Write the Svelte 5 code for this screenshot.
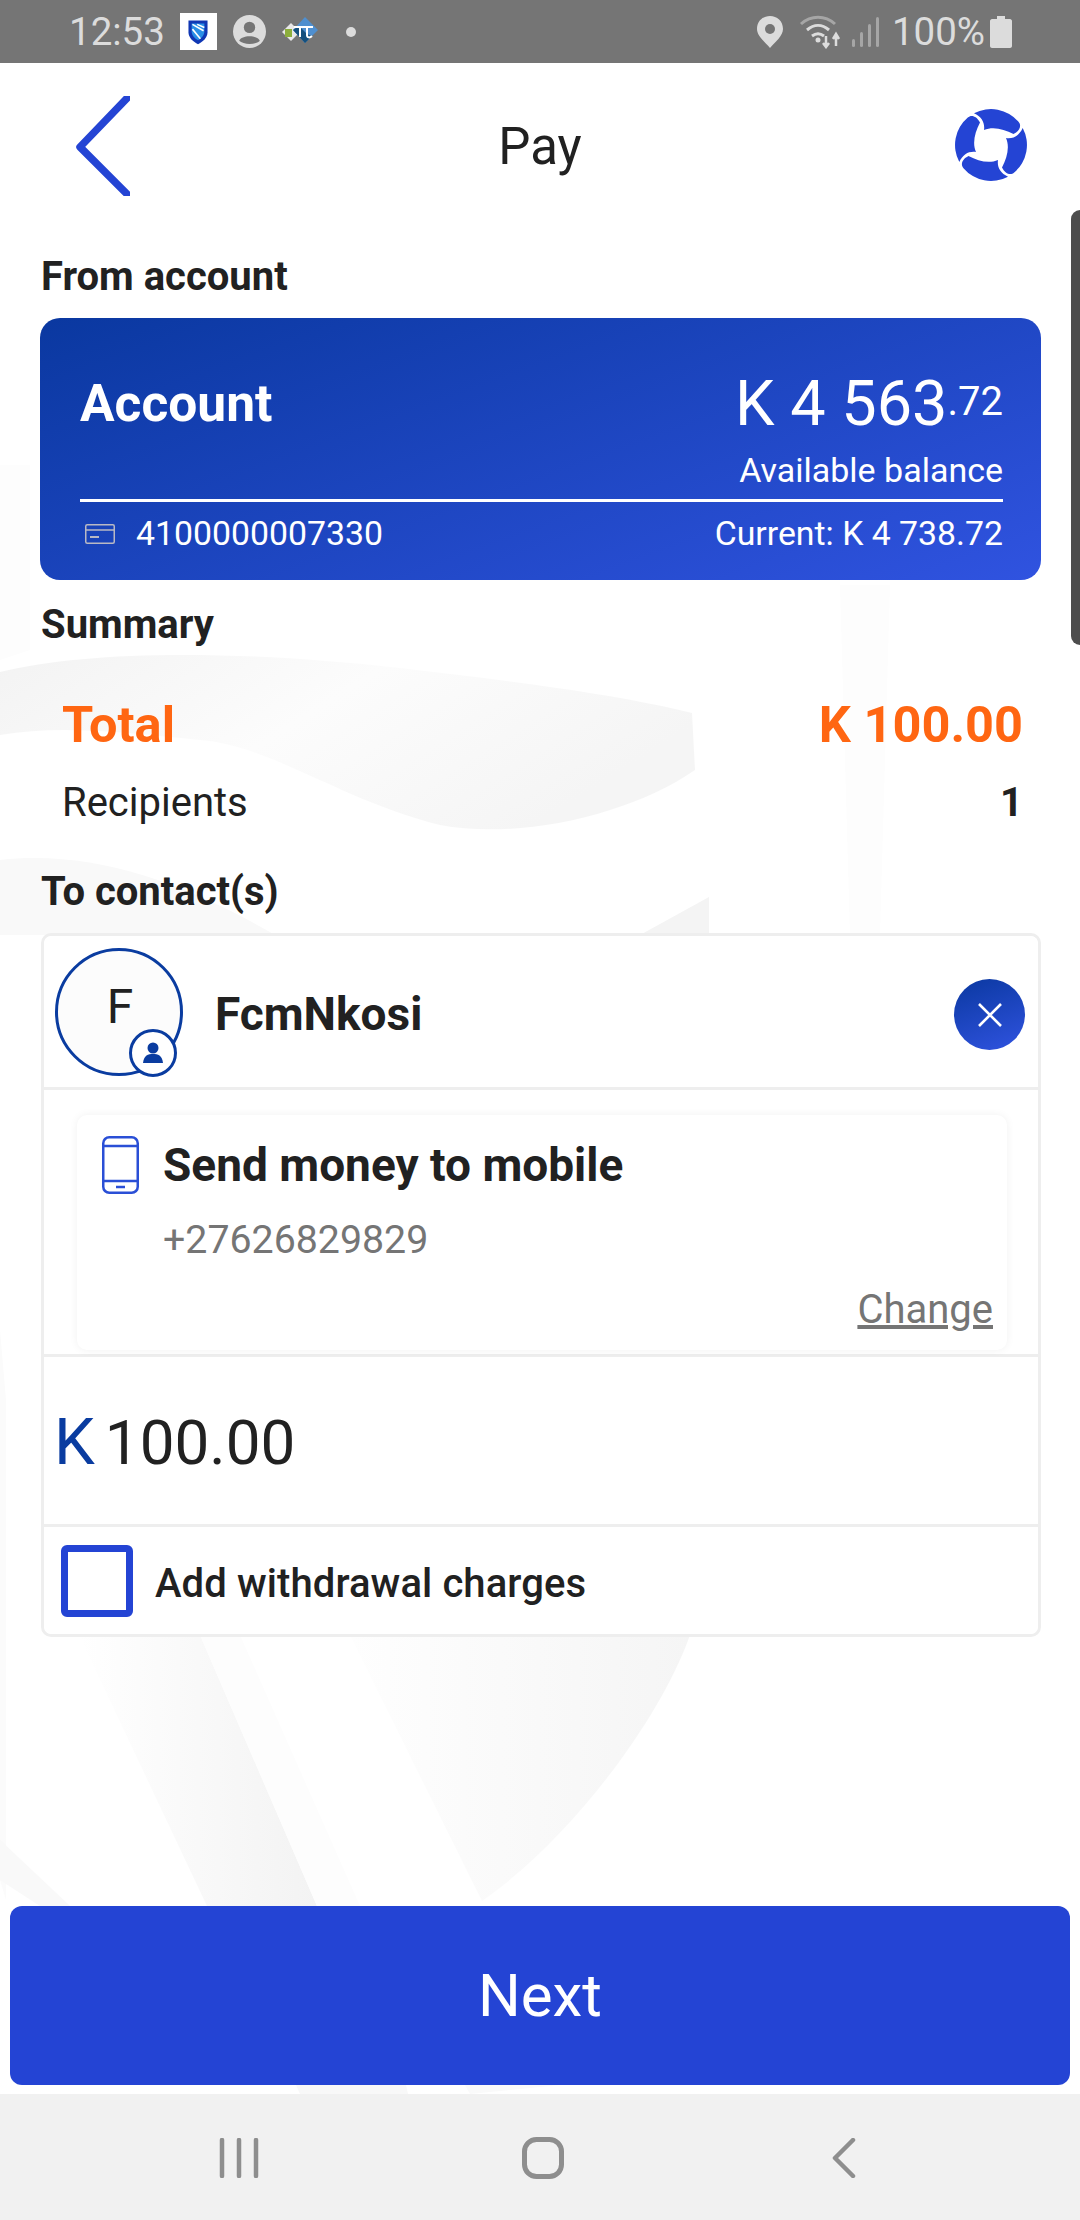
<script>
  let charges = $state(false);
</script>

<div class="page">
  <svg class="watermark" viewBox="0 0 1080 2220" width="1080" height="2220" aria-hidden="true">
    <defs>
      <linearGradient id="fadeA" x1="0" y1="0" x2="1" y2="0.4">
        <stop offset="0" stop-color="#f3f3f3" />
        <stop offset="0.5" stop-color="#fcfcfc" />
        <stop offset="1" stop-color="#f5f5f5" />
      </linearGradient>
      <linearGradient id="fadeB" x1="0" y1="0" x2="1" y2="0">
        <stop offset="0" stop-color="#ffffff" />
        <stop offset="1" stop-color="#f3f3f3" />
      </linearGradient>
      <linearGradient id="fadeC" x1="0" y1="0" x2="1" y2="0">
        <stop offset="0" stop-color="#fefefe" />
        <stop offset="1" stop-color="#f5f5f5" />
      </linearGradient>
    </defs>
    <path d="M0 672C90 650 240 650 400 668C520 682 620 695 692 713L695 770C630 815 520 840 440 825C340 800 270 745 200 740C120 732 60 725 0 735Z" fill="url(#fadeA)" />
    <path d="M0 465H30V650L0 660Z" fill="#fdfdfd" />
    <path d="M0 860C90 850 180 880 275 935H0Z" fill="#f9f9f9" />
    <path d="M709 897V935H640Z" fill="#f4f4f4" />
    <path d="M840 585H890L880 935H850Z" fill="#fdfdfd" />
    <path d="M79 1635H200L317 1906H207Z" fill="url(#fadeB)" />
    <path d="M200 1635H240L360 1906H317Z" fill="#fdfdfd" />
    <path d="M350 1635H690C660 1720 570 1840 482 1901Z" fill="url(#fadeC)" />
    <path d="M0 1330L6 1400V1900L0 1880Z" fill="#fbfbfb" />
    <path d="M0 1840L70 1906H40L0 1880Z" fill="#f9f9f9" />
    <path d="M296 2085H406L408 2094H300Z" fill="#f8f8f8" />
    <path d="M465 2085H560L470 2094Z" fill="#fafafa" />
  </svg>

  <div class="scroll-thumb"></div>

  <header class="status">
    <div class="status-left">
      <span class="clock">12:53</span>
      <span class="bank-tile">
        <svg viewBox="0 0 30 34" width="24" height="27">
          <path d="M3 3H27V18C27 25 21 30 15 33C9 30 3 25 3 18Z" fill="#1037b4" />
          <path d="M7 7H23V17C23 22 19 26 15 28C11 26 7 22 7 17Z" fill="#2a8fe6" />
          <path d="M8 8L22 16M8 14L18 26M14 8L23 12" stroke="#fff" stroke-width="2" fill="none" />
        </svg>
      </span>
      <svg class="person" viewBox="0 0 32 32" width="33" height="33">
        <circle cx="16" cy="16" r="16" fill="#dcdcdc" />
        <circle cx="16" cy="12" r="5.5" fill="#757575" />
        <path d="M6 25C8 19 24 19 26 25C22 29 10 29 6 25Z" fill="#757575" />
      </svg>
      <svg class="pi" viewBox="0 0 38 32" width="38" height="32">
        <path d="M10 7L19 16L10 25L1 16Z" fill="#e8e8e8" />
        <path d="M4 13H11V21H4Z" fill="#8cae3c" />
        <path d="M24 1L37 14L24 27L12 14Z" fill="#4f8fcf" />
        <path d="M24 27L12 14L18 10L26 18L31 20Z" fill="#14507e" />
        <path d="M13 11H32M19 11V21M26 11V19C26 22 29 22 31 20" stroke="#fff" stroke-width="2" fill="none" />
      </svg>
      <span class="dot"></span>
    </div>
    <div class="status-right">
      <svg viewBox="0 0 26 32" width="26" height="32">
        <path d="M13 0C20 0 26 5 26 13C26 20 18 26 13 32C8 26 0 20 0 13C0 5 6 0 13 0Z" fill="#dcdcdc" />
        <circle cx="13" cy="13" r="5" fill="#757575" />
      </svg>
      <svg class="wifi" viewBox="0 0 44 34" width="44" height="34">
        <path d="M2 9C12 0 26 0 36 9" stroke="#a6a6a6" stroke-width="3" fill="none" />
        <path d="M8 15C15 9 23 9 30 15M13 21C17 18 21 18 25 21" stroke="#dcdcdc" stroke-width="3" fill="none" />
        <circle cx="19" cy="25" r="2.5" fill="#dcdcdc" />
        <path d="M27 21V31M24 28L27 32L30 28M37 31V20M34 24L37 19L40 24" stroke="#dcdcdc" stroke-width="2.5" fill="none" />
      </svg>
      <svg class="signal" viewBox="0 0 28 32" width="28" height="32">
        <g fill="#a6a6a6">
          <rect x="0" y="23" width="3" height="8" rx="1.5" />
          <rect x="8" y="16" width="3" height="15" rx="1.5" />
          <rect x="16" y="8" width="3" height="23" rx="1.5" />
          <rect x="24" y="1" width="3" height="30" rx="1.5" />
        </g>
      </svg>
      <span class="battery-text">100%</span>
      <svg viewBox="0 0 22 32" width="22" height="32">
        <path d="M7 0H15V3H20C21 3 22 4 22 5V30C22 31 21 32 20 32H2C1 32 0 31 0 30V5C0 4 1 3 2 3H7Z" fill="#dcdcdc" />
      </svg>
    </div>
  </header>

  <div class="title-bar">
    <button class="icon-btn back" type="button" aria-label="Back">
      <svg viewBox="0 0 54 100" width="54" height="100">
        <path d="M56 -3L4 51L56 103" stroke="#2444d4" stroke-width="7.5" fill="none" stroke-linejoin="round" />
      </svg>
    </button>
    <h1>Pay</h1>
    <button class="icon-btn help" type="button" aria-label="Help">
      <svg viewBox="-36 -36 72 72" width="72" height="72">
        <g fill="#2444d4">
          <path d="M-17 -31.7A36 36 0 0 1 27.5 -23.2C30.5 -20 29.5 -14.5 22.5 -11C13 -16 2 -19 -7 -15C-6 -22 -9 -28 -17 -31.7Z" />
          <path d="M-17 -31.7A36 36 0 0 1 27.5 -23.2C30.5 -20 29.5 -14.5 22.5 -11C13 -16 2 -19 -7 -15C-6 -22 -9 -28 -17 -31.7Z" transform="rotate(90)" />
          <path d="M-17 -31.7A36 36 0 0 1 27.5 -23.2C30.5 -20 29.5 -14.5 22.5 -11C13 -16 2 -19 -7 -15C-6 -22 -9 -28 -17 -31.7Z" transform="rotate(180)" />
          <path d="M-17 -31.7A36 36 0 0 1 27.5 -23.2C30.5 -20 29.5 -14.5 22.5 -11C13 -16 2 -19 -7 -15C-6 -22 -9 -28 -17 -31.7Z" transform="rotate(270)" />
        </g>
      </svg>
    </button>
  </div>

  <main class="content">
    <div class="label">From account</div>
    <section class="account">
      <div class="account-top">
        <span class="account-name">Account</span>
        <span class="balance">K 4 563<small>.72</small></span>
      </div>
      <div class="available">Available balance</div>
      <div class="rule"></div>
      <div class="account-bottom">
        <span class="account-no">
          <svg viewBox="0 0 30 20" width="30" height="20">
            <rect x="0.75" y="0.75" width="28.5" height="18.5" rx="1.5" stroke="#b9b9c4" stroke-width="1.5" fill="none" />
            <path d="M1 6H29" stroke="#b9b9c4" stroke-width="1.5" />
            <path d="M5 13H14" stroke="#b9b9c4" stroke-width="2" />
          </svg>
          4100000007330
        </span>
        <span>Current: K 4 738.72</span>
      </div>
    </section>

    <div class="label summary-label">Summary</div>
    <div class="row total"><span>Total</span><span>K 100.00</span></div>
    <div class="row recipients"><span>Recipients</span><b>1</b></div>

    <div class="label contacts-label">To contact(s)</div>
    <section class="contacts">
      <div class="contact">
        <div class="avatar">
          F
          <span class="badge">
            <svg viewBox="0 0 24 24" width="24" height="24">
              <circle cx="12" cy="7" r="5.5" fill="#0a3ca0" />
              <path d="M2 22C3 14 7 13 12 13C17 13 21 14 22 22Z" fill="#0a3ca0" />
            </svg>
          </span>
        </div>
        <span class="contact-name">FcmNkosi</span>
        <button class="remove" type="button" aria-label="Remove">
          <svg viewBox="0 0 26 26" width="26" height="26">
            <path d="M2 2L24 24M24 2L2 24" stroke="#fff" stroke-width="2.6" />
          </svg>
        </button>
      </div>
      <div class="method-wrap">
        <div class="method">
          <svg class="phone" viewBox="0 0 37 58" width="37" height="58">
            <rect x="1.25" y="1.25" width="34.5" height="55.5" rx="6" stroke="#2a4fd6" stroke-width="2.5" fill="none" />
            <path d="M1 10H36M1 45H36" stroke="#2a4fd6" stroke-width="2.5" />
            <path d="M14 51H23" stroke="#2a4fd6" stroke-width="2.5" />
          </svg>
          <div class="method-text">
            <div class="method-title">Send money to mobile</div>
            <div class="method-phone">+27626829829</div>
          </div>
          <a class="change" href="#change">Change</a>
        </div>
      </div>
      <div class="amount"><span class="currency">K</span>100.00</div>
      <label class="charges">
        <input type="checkbox" bind:checked={charges} />
        <span>Add withdrawal charges</span>
      </label>
    </section>

    <button class="next" type="button">Next</button>
  </main>

  <nav class="softkeys">
    <svg viewBox="0 0 40 40" width="40" height="40">
      <path d="M3 2V38M20 2V38M37 2V38" stroke="#8e8e8e" stroke-width="4.5" stroke-linecap="round" />
    </svg>
    <svg class="home" viewBox="0 0 42 42" width="42" height="42">
      <rect x="2.5" y="2.5" width="37" height="37" rx="12" stroke="#8e8e8e" stroke-width="5" fill="none" />
    </svg>
    <svg viewBox="0 0 24 40" width="24" height="40">
      <path d="M21 2L3 20L21 38" stroke="#8e8e8e" stroke-width="4.5" stroke-linecap="round" stroke-linejoin="round" fill="none" />
    </svg>
  </nav>
</div>

<style>
  :global(body) {
    margin: 0;
    background: #fff;
  }

  .page {
    position: relative;
    width: 1080px;
    height: 2220px;
    overflow: hidden;
    display: flex;
    flex-direction: column;
    font-family: Roboto, "Liberation Sans", sans-serif;
    color: #212121;
    background: #fff;
  }

  .watermark {
    position: absolute;
    left: 0;
    top: 0;
  }

  .scroll-thumb {
    position: absolute;
    right: 0;
    top: 210px;
    width: 9px;
    height: 435px;
    background: #4d4d4d;
    border-radius: 9px 0 0 9px;
  }

  .status {
    position: relative;
    height: 63px;
    flex: none;
    background: #757575;
    color: #dcdcdc;
    display: flex;
    justify-content: space-between;
    align-items: center;
    padding: 0 68px 0 69px;
    font-size: 38.5px;
  }

  .status-left,
  .status-right {
    display: flex;
    align-items: center;
  }

  .bank-tile {
    width: 37px;
    height: 37px;
    margin-left: 15px;
    background: #fff;
    display: flex;
    align-items: center;
    justify-content: center;
  }

  .person {
    margin-left: 16px;
  }

  .pi {
    margin-left: 15px;
  }

  .dot {
    width: 10px;
    height: 10px;
    margin-left: 27px;
    border-radius: 50%;
    background: #dcdcdc;
  }

  .wifi {
    margin-left: 16px;
  }

  .signal {
    margin-left: 9px;
  }

  .battery-text {
    margin: 0 5px 0 12px;
  }

  .title-bar {
    position: relative;
    height: 166px;
    flex: none;
    display: flex;
    align-items: center;
    justify-content: center;
  }

  .title-bar h1 {
    margin: 0;
    font-size: 51px;
    font-weight: 400;
  }

  .icon-btn {
    position: absolute;
    padding: 0;
    border: 0;
    background: none;
    display: flex;
  }

  .back {
    left: 76px;
    top: 33px;
  }

  .help {
    left: 955px;
    top: 46px;
  }

  .content {
    position: relative;
    flex: 1;
    display: flex;
    flex-direction: column;
  }

  .label {
    margin: 18px 0 0 41px;
    height: 60px;
    line-height: 60px;
    font-size: 40px;
    font-weight: 700;
  }

  .account {
    margin: 11px 39px 0 40px;
    height: 262px;
    padding: 0 38px 0 40px;
    border-radius: 20px;
    box-sizing: border-box;
    color: #fff;
    background: linear-gradient(160deg, #0a38a0, #3053e0);
    display: flex;
    flex-direction: column;
  }

  .account-top {
    margin-top: 55px;
    height: 60px;
    display: flex;
    justify-content: space-between;
    align-items: center;
  }

  .account-name {
    font-size: 51.5px;
    font-weight: 700;
  }

  .balance {
    font-size: 63px;
  }

  .balance small {
    font-size: 40px;
    vertical-align: 10px;
  }

  .available {
    margin-top: 15px;
    line-height: 44px;
    text-align: right;
    font-size: 34px;
  }

  .rule {
    margin-top: 7px;
    height: 2.5px;
    flex: none;
    background: #fff;
  }

  .account-bottom {
    margin-top: 12px;
    height: 40px;
    display: flex;
    justify-content: space-between;
    align-items: center;
    font-size: 33.8px;
  }

  .account-no {
    display: flex;
    align-items: center;
    gap: 21px;
    padding-left: 5px;
  }

  .summary-label {
    margin-top: 15px;
  }

  .row {
    display: flex;
    justify-content: space-between;
    align-items: center;
    margin: 0 57px 0 62px;
  }

  .total {
    margin-top: 29px;
    height: 80px;
    color: #ff6612;
    font-size: 50.5px;
    font-weight: 700;
  }

  .recipients {
    height: 76px;
    font-size: 40px;
  }

  .recipients b {
    font-weight: 700;
  }

  .contacts-label {
    margin-top: 22px;
  }

  .contacts {
    margin: 11px 39px 0 41px;
    height: 704px;
    box-sizing: border-box;
    border: 3px solid #eeeeee;
    border-radius: 10px;
    display: flex;
    flex-direction: column;
  }

  .contact {
    position: relative;
    height: 154px;
    flex: none;
    box-sizing: border-box;
    border-bottom: 3px solid #eeeeee;
    display: flex;
    align-items: center;
    background: #fff;
    border-radius: 8px 8px 0 0;
  }

  .avatar {
    position: relative;
    width: 128px;
    height: 128px;
    margin-left: 11px;
    box-sizing: border-box;
    border: 3px solid #0a3ca0;
    border-radius: 50%;
    background: #fcfcfc;
    font-size: 48px;
    display: flex;
    align-items: center;
    justify-content: center;
    padding-bottom: 10px;
    padding-left: 2px;
  }

  .badge {
    position: absolute;
    right: 3px;
    bottom: -4px;
    width: 48px;
    height: 48px;
    box-sizing: border-box;
    border: 3px solid #0a3ca0;
    border-radius: 50%;
    background: #fff;
    display: flex;
    align-items: center;
    justify-content: center;
  }

  .contact-name {
    margin: 4px 0 0 32px;
    font-size: 46px;
    font-weight: 700;
  }

  .remove {
    position: absolute;
    right: 13px;
    top: 43px;
    width: 71px;
    height: 71px;
    padding: 0;
    border: 0;
    border-radius: 50%;
    background: linear-gradient(160deg, #0a38a0, #3053e0);
    display: flex;
    align-items: center;
    justify-content: center;
  }

  .method-wrap {
    height: 267px;
    flex: none;
    box-sizing: border-box;
    padding: 25px 31px 4px 33px;
    border-bottom: 3px solid #eeeeee;
    background: rgba(255, 255, 255, 0.75);
  }

  .method {
    position: relative;
    height: 100%;
    border-radius: 10px;
    background: #fff;
    box-shadow: 0 0 8px rgba(0, 0, 0, 0.06);
    display: flex;
  }

  .phone {
    margin: 21px 0 0 25px;
    flex: none;
  }

  .method-text {
    margin-left: 24px;
  }

  .method-title {
    margin-top: 21px;
    line-height: 58px;
    font-size: 46px;
    font-weight: 700;
  }

  .method-phone {
    margin-top: 21px;
    line-height: 50px;
    font-size: 39.3px;
    color: #757575;
  }

  .change {
    position: absolute;
    right: 14px;
    bottom: 17px;
    font-size: 40px;
    color: #757575;
  }

  .amount {
    height: 170px;
    flex: none;
    box-sizing: border-box;
    border-bottom: 3px solid #eeeeee;
    padding: 3px 0 0 10px;
    display: flex;
    align-items: center;
    font-size: 62px;
    background: #fff;
  }

  .currency {
    color: #0a3ca0;
    margin-right: 10px;
    font-size: 65px;
  }

  .charges {
    flex: 1;
    display: flex;
    align-items: center;
    padding-left: 17px;
    font-size: 40px;
    font-weight: 500;
    background: #fff;
    border-radius: 0 0 8px 8px;
  }

  .charges span {
    margin-top: 5px;
    letter-spacing: 0.1px;
  }

  .charges input {
    appearance: none;
    width: 72px;
    height: 72px;
    margin: 0 22px 0 0;
    box-sizing: border-box;
    border: 7px solid #2444d4;
    border-radius: 6px;
    background: #fff;
  }

  .next {
    margin: auto 10px 9px;
    height: 179px;
    flex: none;
    border: 0;
    border-radius: 12px;
    background: #2444d4;
    color: #fff;
    font-family: inherit;
    font-size: 60px;
  }

  .softkeys {
    position: relative;
    height: 126px;
    flex: none;
    box-sizing: border-box;
    padding: 2px 224px 0 219px;
    background: #f1f1f1;
    display: flex;
    align-items: center;
    justify-content: space-between;
  }

  .home {
    margin-right: 6px;
  }
</style>
